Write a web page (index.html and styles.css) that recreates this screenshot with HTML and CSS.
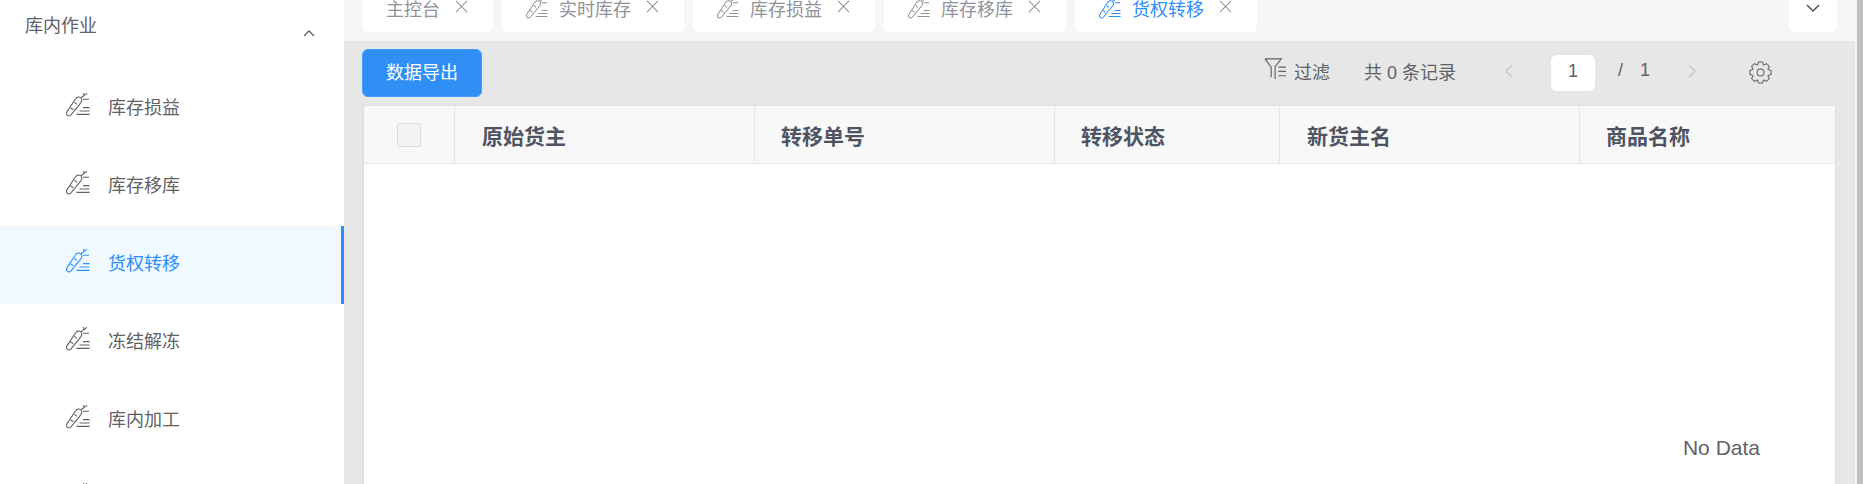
FILE: index.html
```html
<!DOCTYPE html>
<html lang="zh-CN">
<head>
    <meta charset="UTF-8">
    <meta name="viewport" content="width=device-width, initial-scale=1.0">
    <title>货权转移</title>
    <link rel="stylesheet" href="styles.css">
</head>
<body>
    <svg class="icon-defs" width="0" height="0">
        <symbol id="i-carrot" viewBox="0 0 24 24">
            <path d="M1.5 22.4c-1.2-1-1.2-2.4-.4-3.8L9.4 6c1.5-2 3.6-2.6 5.2-1.4 1.6 1.2 1.6 3.4.2 5.2L5 21.8c-1.2 1.2-2.4 1.6-3.5.6z" fill="none" stroke="currentColor" stroke-width="1.1"/>
            <path d="M4.4 14.6l2.8 2.2M8.4 9.4l2.4 1.8M15 4.8l6-4.4M18 2.6L17.6 0M17 6.2h6" fill="none" stroke="currentColor" stroke-width="1.1"/>
            <path d="M17 14.6h6.5M13.5 18h10M10.5 21.4h13" fill="none" stroke="currentColor" stroke-width="1.1"/>
        </symbol>
        <symbol id="i-close" viewBox="0 0 14 14">
            <path d="M1 1l12 12M13 1L1 13" fill="none" stroke="currentColor" stroke-width="1.1"/>
        </symbol>
    </svg>

    <div class="layout">
        <aside class="sidebar">
            <div class="group-title">
                <span>库内作业</span>
                <svg class="group-arrow" viewBox="0 0 12 7" width="12" height="7"><path d="M1 6l5-5 5 5" fill="none" stroke="currentColor" stroke-width="1.3"/></svg>
            </div>
            <div class="menu-item">
                <svg class="menu-icon"><use href="#i-carrot"/></svg>
                <span class="menu-text">库存损益</span>
            </div>
            <div class="menu-item">
                <svg class="menu-icon"><use href="#i-carrot"/></svg>
                <span class="menu-text">库存移库</span>
            </div>
            <div class="menu-item active">
                <svg class="menu-icon"><use href="#i-carrot"/></svg>
                <span class="menu-text">货权转移</span>
            </div>
            <div class="menu-item">
                <svg class="menu-icon"><use href="#i-carrot"/></svg>
                <span class="menu-text">冻结解冻</span>
            </div>
            <div class="menu-item">
                <svg class="menu-icon"><use href="#i-carrot"/></svg>
                <span class="menu-text">库内加工</span>
            </div>
            <div class="menu-item">
                <svg class="menu-icon"><use href="#i-carrot"/></svg>
            </div>
        </aside>

        <main class="main">
            <div class="tab-bar">
                <div class="tab tab-home">
                    <span>主控台</span>
                    <svg class="tab-close"><use href="#i-close"/></svg>
                </div>
                <div class="tab">
                    <svg class="tab-icon"><use href="#i-carrot"/></svg>
                    <span>实时库存</span>
                    <svg class="tab-close"><use href="#i-close"/></svg>
                </div>
                <div class="tab">
                    <svg class="tab-icon"><use href="#i-carrot"/></svg>
                    <span>库存损益</span>
                    <svg class="tab-close"><use href="#i-close"/></svg>
                </div>
                <div class="tab">
                    <svg class="tab-icon"><use href="#i-carrot"/></svg>
                    <span>库存移库</span>
                    <svg class="tab-close"><use href="#i-close"/></svg>
                </div>
                <div class="tab active">
                    <svg class="tab-icon"><use href="#i-carrot"/></svg>
                    <span>货权转移</span>
                    <svg class="tab-close"><use href="#i-close"/></svg>
                </div>
                <div class="tab-more">
                    <svg viewBox="0 0 14 8" width="14" height="8"><path d="M1 1l6 6 6-6" fill="none" stroke="currentColor" stroke-width="1.5"/></svg>
                </div>
            </div>

            <div class="content">
                <div class="toolbar">
                    <button class="btn-export">数据导出</button>
                    <div class="toolbar-right">
                        <div class="filter">
                            <svg viewBox="0 0 24 24" width="23" height="24"><path d="M1 1.5h17l-6.4 8v13M1 1.5l6.5 8.5v10.5" fill="none" stroke="currentColor" stroke-width="1.2"/><path d="M15 10h8M15 14.5h8M15 19h8" fill="none" stroke="currentColor" stroke-width="1.2"/></svg>
                            <span>过滤</span>
                        </div>
                        <span class="total">共 0 条记录</span>
                        <svg class="page-arrow prev" viewBox="0 0 8 14" width="8" height="14"><path d="M7 1L1 7l6 6" fill="none" stroke="currentColor" stroke-width="1.5"/></svg>
                        <div class="page-input">1</div>
                        <span class="page-slash">/</span>
                        <span class="page-count">1</span>
                        <svg class="page-arrow next" viewBox="0 0 8 14" width="8" height="14"><path d="M1 1l6 6-6 6" fill="none" stroke="currentColor" stroke-width="1.5"/></svg>
                        <svg class="gear" viewBox="0 0 24 24" width="23" height="23"><path d="M9.06 3.92L9.86 1.01H14.14L14.94 3.92L15.63 4.21L18.26 2.71L21.29 5.74L19.79 8.37L20.08 9.06L22.99 9.86V14.14L20.08 14.94L19.79 15.63L21.29 18.26L18.26 21.29L15.63 19.79L14.94 20.08L14.14 22.99H9.86L9.06 20.08L8.37 19.79L5.74 21.29L2.71 18.26L4.21 15.63L3.92 14.94L1.01 14.14V9.86L3.92 9.06L4.21 8.37L2.71 5.74L5.74 2.71L8.37 4.21Z" fill="none" stroke="currentColor" stroke-width="1.1"/><circle cx="12" cy="12" r="3.6" fill="none" stroke="currentColor" stroke-width="1.1"/></svg>
                    </div>
                </div>

                <div class="table">
                    <div class="table-head">
                        <div class="cell cell-check"><span class="checkbox"></span></div>
                        <div class="cell cell-owner">原始货主</div>
                        <div class="cell cell-no">转移单号</div>
                        <div class="cell cell-status">转移状态</div>
                        <div class="cell cell-new">新货主名</div>
                        <div class="cell cell-name">商品名称</div>
                    </div>
                    <div class="table-body">
                        <span class="no-data">No Data</span>
                    </div>
                </div>
            </div>
        </main>
        <div class="scrollbar"></div>
    </div>
</body>
</html>
```

FILE: styles.css
```css
html, body {
    margin: 0;
    height: 100%;
    overflow: hidden;
}
body {
    font-family: "Liberation Sans", "Noto Sans CJK SC", sans-serif;
    font-size: 18px;
    color: #606266;
    background-color: #fff;
}
.icon-defs {
    display: block;
    height: 0;
}
.layout {
    display: flex;
    height: 484px;
    overflow: hidden;
}

/* 左侧菜单 */
.sidebar {
    width: 344px;
    flex-shrink: 0;
    background-color: #fff;
    overflow: hidden;
}
.group-title {
    height: 70px;
    box-sizing: border-box;
    padding: 13px 29px 0 25px;
    display: flex;
    justify-content: space-between;
    align-items: flex-start;
    line-height: 26px;
}
.group-arrow {
    margin-top: 17px;
}
.menu-item {
    height: 78px;
    box-sizing: border-box;
    padding-left: 66px;
    display: flex;
    align-items: center;
}
.menu-item.active {
    color: #2f8ff5;
    background-color: #f0f9ff;
    border-right: 3px solid #2f8ff5;
}
.menu-icon {
    width: 24px;
    height: 24px;
    margin: -8px 18px 0 0;
}
.menu-text {
    margin-bottom: 6px;
}

/* 右侧 */
.main {
    flex: 1;
    min-width: 0;
    display: flex;
    flex-direction: column;
    background-color: #e7e7e7;
    border-right: 2px solid #f5f6f8;
}
.tab-bar {
    height: 41px;
    flex-shrink: 0;
    box-sizing: border-box;
    padding: 0 18px;
    background-color: #f5f6f8;
    display: flex;
    align-items: flex-start;
    gap: 9px;
    overflow: hidden;
}
.tab {
    height: 49px;
    margin-top: -17px;
    box-sizing: border-box;
    padding: 0 25px 0 24px;
    display: flex;
    align-items: center;
    flex-shrink: 0;
    background-color: #fff;
    border-radius: 6px;
    color: #909399;
}
.tab.active {
    color: #2f8ff5;
}
.tab-icon {
    width: 22px;
    height: 22px;
    margin: 0 11px 0 0;
    flex-shrink: 0;
}
.tab-close {
    width: 13px;
    height: 13px;
    margin-left: 15px;
    margin-top: -2px;
}
.tab.active .tab-close {
    color: #909399;
}
.tab-more {
    width: 48px;
    height: 48px;
    margin-top: -16px;
    margin-left: auto;
    display: flex;
    align-items: center;
    justify-content: center;
    background-color: #fff;
    border-radius: 6px;
    color: #4f5463;
}
.content {
    flex: 1;
    min-height: 0;
    padding: 8px 19px 0 18px;
    display: flex;
    flex-direction: column;
}
.toolbar {
    display: flex;
    justify-content: space-between;
    margin-bottom: 8px;
}
.btn-export {
    width: 120px;
    height: 48px;
    padding: 0 0 4px;
    border: 1px solid #409eff;
    border-radius: 6px;
    background-color: #2f8ff5;
    color: #fff;
    font-family: inherit;
    font-size: 18px;
}
.toolbar-right {
    display: flex;
    align-items: center;
    padding: 0 64px 5px 0;
}
.filter {
    display: flex;
    align-items: center;
    gap: 7px;
    margin-right: 34px;
}
.filter svg {
    margin-top: -3px;
}
.page-arrow {
    color: #c8c9cc;
}
.page-arrow.prev {
    margin-left: 49px;
}
.page-input {
    width: 44px;
    height: 36px;
    margin: 5px 0 0 38px;
    border-radius: 6px;
    background-color: #fff;
    text-align: center;
    line-height: 33px;
}
.page-slash {
    margin-left: 23px;
}
.page-count {
    margin-left: 17px;
}
.page-arrow.next {
    margin-left: 38px;
}
.gear {
    margin: 4px 0 0 53px;
}

/* 表格 */
.table {
    flex: 1;
    display: flex;
    flex-direction: column;
    border: 1px solid #e0e0e0;
    border-left-width: 2px;
    border-bottom: none;
    background-color: #fff;
}
.table-head {
    display: flex;
    height: 57px;
    background-color: #f8f8f8;
    border-bottom: 1px solid #e6e6e6;
    font-size: 21px;
    font-weight: bold;
    color: #4f5463;
}
.cell {
    box-sizing: border-box;
    display: flex;
    align-items: center;
    padding-left: 26px;
    border-right: 1px solid #e6e6e6;
}
.cell-check {
    width: 91px;
    padding-left: 0;
    justify-content: center;
}
.cell-owner {
    width: 300px;
    padding-left: 27px;
}
.cell-no {
    width: 300px;
}
.cell-status {
    width: 225px;
}
.cell-new {
    width: 300px;
    padding-left: 27px;
}
.cell-name {
    flex: 1;
    border-right: none;
}
.checkbox {
    width: 24px;
    height: 24px;
    box-sizing: border-box;
    border: 1px solid #dcdcdc;
    border-radius: 3px;
    background-color: #f3f3f3;
}
.table-body {
    flex: 1;
    padding: 272px 75px 0 0;
    text-align: right;
    font-size: 21px;
    line-height: 24px;
}
.scrollbar {
    width: 6px;
    flex-shrink: 0;
    background-color: #c0c0c0;
}
```
